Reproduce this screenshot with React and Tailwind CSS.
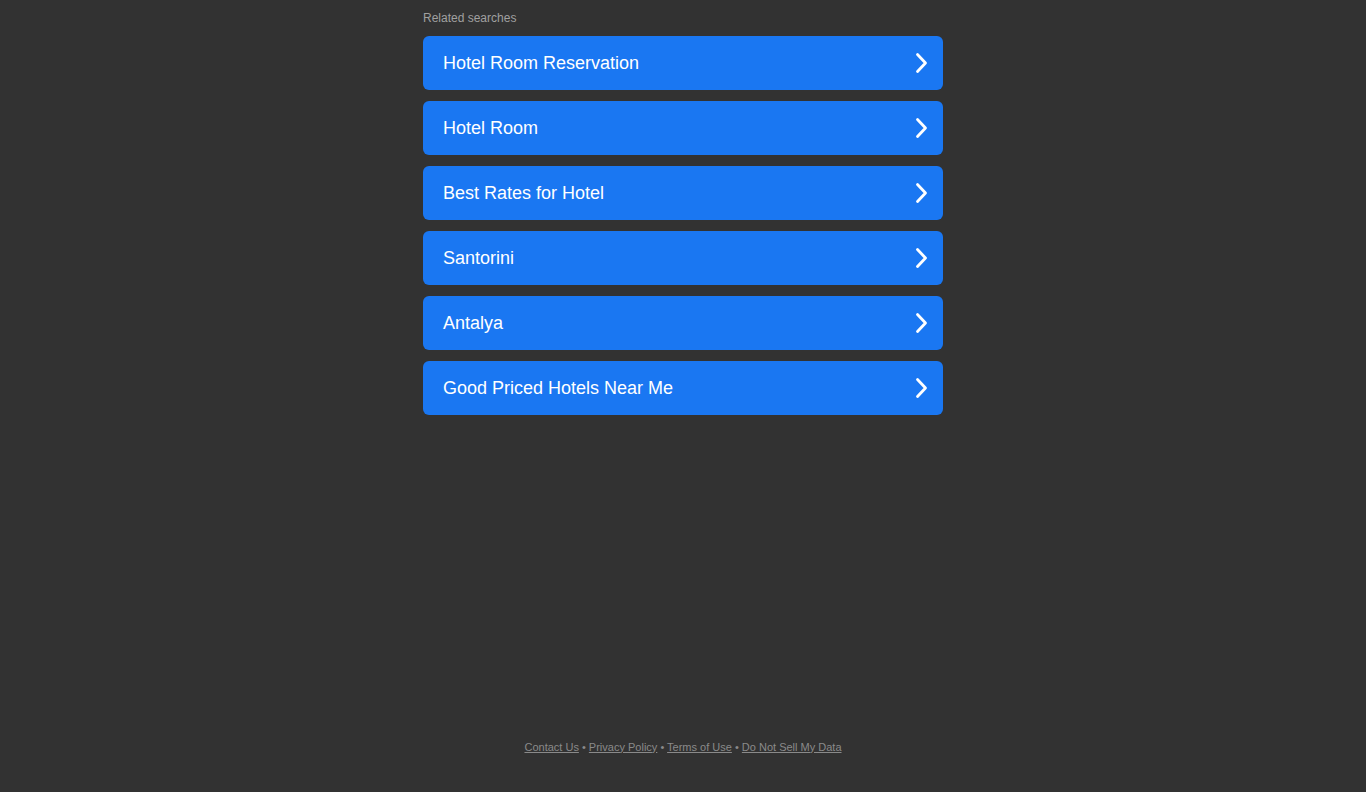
import React from 'react';

const searches = [
  'Hotel Room Reservation',
  'Hotel Room',
  'Best Rates for Hotel',
  'Santorini',
  'Antalya',
  'Good Priced Hotels Near Me',
];

function Chevron() {
  return (
    <svg width="16" height="22" viewBox="0 0 16 22" fill="none">
      <path d="M3.5 2.5 L11.5 11 L3.5 19.5" stroke="white" strokeWidth="2.8" strokeLinecap="round" strokeLinejoin="round" />
    </svg>
  );
}

export default function App() {
  return (
    <div className="min-h-screen bg-[#323232] flex flex-col font-['Liberation_Sans',Arial,sans-serif]">
      <div className="w-[520px] mx-auto pt-[11px]">
        <p className="text-[12px] leading-[14px] text-[#a0a0a0]">Related searches</p>
        <div className="mt-[11px] flex flex-col gap-[11px]">
          {searches.map((s) => (
            <a
              key={s}
              href="#"
              className="h-[54px] rounded-[6px] bg-[#1a77f2] flex items-center justify-between pl-5 pr-[13px] text-white text-[18px]"
            >
              <span>{s}</span>
              <Chevron />
            </a>
          ))}
        </div>
      </div>
      <footer className="mt-auto pb-[37px] text-center text-[11px] text-[#8a8a8a]">
        <a href="#" className="underline">Contact Us</a>
        <span> • </span>
        <a href="#" className="underline">Privacy Policy</a>
        <span> • </span>
        <a href="#" className="underline">Terms of Use</a>
        <span> • </span>
        <a href="#" className="underline">Do Not Sell My Data</a>
      </footer>
    </div>
  );
}
